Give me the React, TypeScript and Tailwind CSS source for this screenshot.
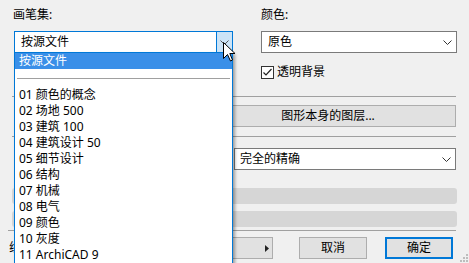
import React from 'react';

const items = [
  '01 颜色的概念',
  '02 场地 500',
  '03 建筑 100',
  '04 建筑设计 50',
  '05 细节设计',
  '06 结构',
  '07 机械',
  '08 电气',
  '09 颜色',
  '10 灰度',
  '11 ArchiCAD 9',
];

const Chevron = ({ color = '#333' }: { color?: string }) => (
  <svg width="9" height="5" viewBox="0 0 9 5" className="block">
    <path d="M0.5 0.5 L4.5 4.5 L8.5 0.5" fill="none" stroke={color} strokeWidth="1" />
  </svg>
);

export default function App() {
  return (
    <div className="relative w-[469px] h-[263px] overflow-hidden bg-[#f0f0f0] text-[12px] leading-[16px] text-black font-['Noto_Sans','Noto_Sans_CJK_SC',sans-serif]">
      {/* top: pen set + colour */}
      <div className="flex pl-[14px] pt-[7px]">
        <div className="w-[219px]">
          <div className="h-[24px] -ml-px">画笔集:</div>
          <div className="flex h-[22px] border border-[#0078d7] bg-white">
            <div className="flex-1 pl-[6px] leading-[20px]">按源文件</div>
            <div className="w-[16px] bg-[#cce4f7] border-l border-[#0078d7] flex items-center justify-center">
              <Chevron color="#555" />
            </div>
          </div>
        </div>
        <div className="ml-[28px] w-[196px]">
          <div className="h-[24px]">颜色:</div>
          <div className="flex items-center h-[22px] border border-[#7a7a7a] bg-white">
            <div className="flex-1 pl-[6px] leading-[20px]">原色</div>
            <div className="pr-[4px]"><Chevron /></div>
          </div>
          <div className="mt-[11px] h-[16px] flex items-center">
            <div className="w-[13px] h-[13px] border border-[#333] bg-white flex items-center justify-center">
              <svg width="11" height="11" viewBox="0 0 11 11" className="block">
                <path d="M1.5 5.5 L4 8 L9.5 2" fill="none" stroke="#222" strokeWidth="1.2" />
              </svg>
            </div>
            <span className="ml-[3px]">透明背景</span>
          </div>
        </div>
      </div>

      <div className="mt-[16px] ml-[12px] w-[444px] h-px bg-[#a0a0a0]" />

      <div className="mt-[8px] ml-[200px] w-[256px] h-[22px] border border-[#adadad] bg-[#e1e1e1] text-center leading-[20px]">
        图形本身的图层...
      </div>

      <div className="mt-[9px] ml-[12px] w-[444px] h-px bg-[#a0a0a0]" />

      <div className="mt-[11px] flex h-[22px]">
        <div className="ml-[12px] w-[2px]" />
        <div className="ml-[220px] w-[222px] flex items-center border border-[#7a7a7a] bg-white">
          <div className="flex-1 pl-[5px] leading-[20px]">完全的精确</div>
          <div className="pr-[4px]"><Chevron /></div>
        </div>
      </div>

      <div className="mt-[18px] ml-[12px] w-[445px] h-[16px] rounded-[3px] bg-[#d6d6d6]" />
      <div className="mt-[7px] ml-[12px] w-[445px] h-[16px] rounded-[3px] bg-[#d6d6d6]" />

      <div className="mt-[3px] ml-[8px] w-[448px] h-px bg-[#a0a0a0]" />

      <div className="mt-[6px] flex h-[22px]">
        <div className="ml-[9px] w-[5px] overflow-hidden whitespace-nowrap leading-[22px]">线</div>
        <div className="ml-[106px] w-[153px] flex items-center justify-end pr-[3px] border border-[#adadad] bg-[#e1e1e1]">
          <svg width="4" height="7" viewBox="0 0 4 7" className="block">
            <path d="M0 0 L4 3.5 L0 7 Z" fill="#222" />
          </svg>
        </div>
        <div className="ml-[26px] w-[68px] border border-[#adadad] bg-[#e1e1e1] text-center leading-[20px]">取消</div>
        <div className="ml-[18px] w-[68px] border-2 border-[#0078d7] bg-[#e1e1e1] text-center leading-[18px]">确定</div>
      </div>

      {/* resize grip */}
      <svg width="9" height="9" viewBox="0 0 9 9" className="absolute right-0 bottom-0">
        <rect x="6" y="0" width="2" height="2" fill="#bdbdbd" />
        <rect x="3" y="3" width="2" height="2" fill="#bdbdbd" />
        <rect x="6" y="3" width="2" height="2" fill="#bdbdbd" />
        <rect x="0" y="6" width="2" height="2" fill="#bdbdbd" />
        <rect x="3" y="6" width="2" height="2" fill="#bdbdbd" />
        <rect x="6" y="6" width="2" height="2" fill="#bdbdbd" />
      </svg>

      {/* open dropdown list */}
      <div className="absolute left-[14px] top-[52px] w-[219px] h-[230px] bg-white border border-[#0078d7] shadow-[2px_2px_3px_rgba(0,0,0,0.35)]">
        <div className="h-[16px] pl-[4px] bg-[#3a8fe8] text-white">按源文件</div>
        <div className="mt-[9px] mx-[2px] h-px bg-[#a0a0a0]" />
        <div className="mt-[8px]">
          {items.map(t => (
            <div key={t} className="h-[16px] pl-[4px] whitespace-nowrap">{t}</div>
          ))}
        </div>
      </div>

      {/* mouse cursor */}
      <svg width="13" height="20" viewBox="0 0 13 20" className="absolute left-[223px] top-[42px]">
        <path d="M0.5 0.5 L0.5 16.5 L4.5 12.5 L7.5 19 L9.5 18 L6.8 11.5 L12 11.5 Z" fill="#fff" stroke="#000" strokeWidth="1" strokeLinejoin="miter" />
      </svg>
    </div>
  );
}
